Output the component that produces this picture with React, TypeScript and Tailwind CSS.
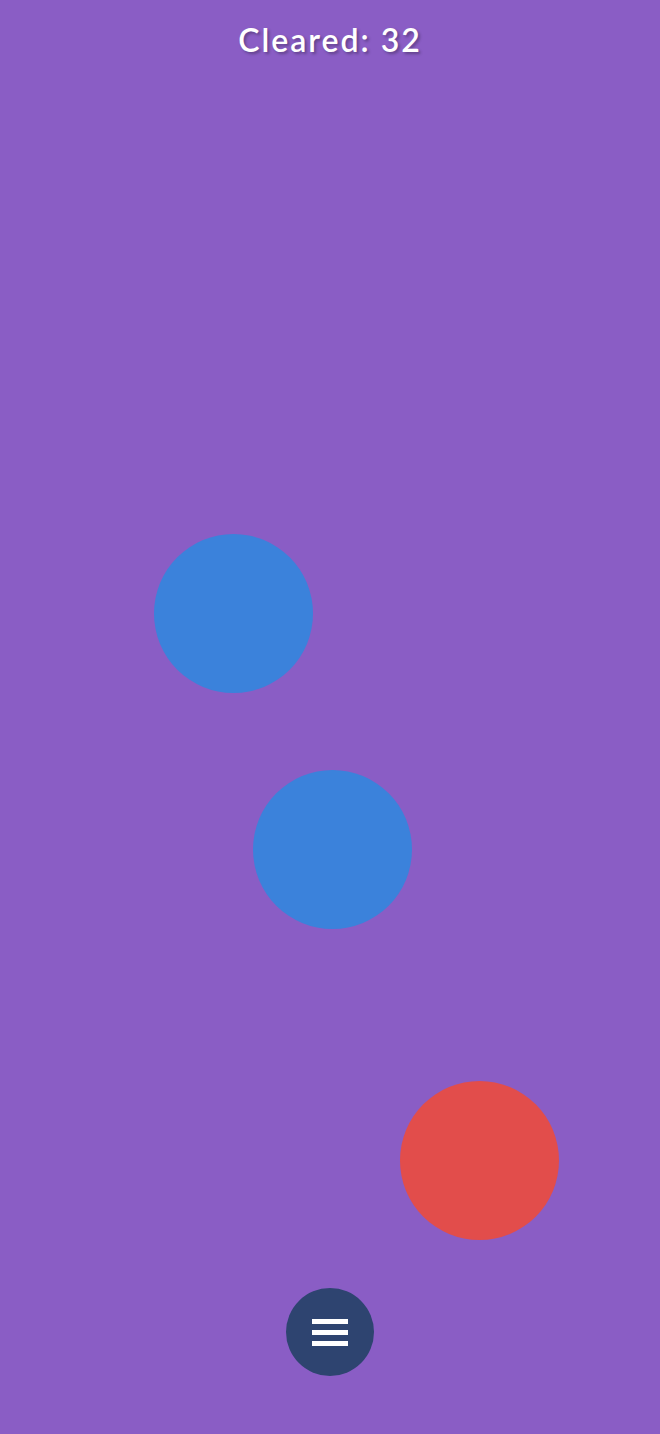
import React from "react";

const balls = [
  { x: 154, y: 534, color: "#3b82db" },
  { x: 253, y: 770, color: "#3b82db" },
  { x: 400, y: 1081, color: "#e24d4b" },
];

export default function App() {
  return (
    <div
      className="relative w-[660px] h-[1434px] overflow-hidden bg-[#8a5dc5] flex flex-col items-center justify-between pt-[20px] pb-[58px]"
      style={{ fontFamily: '"Lato", "Noto Sans", sans-serif' }}
    >
      <h1 className="text-[32px] leading-[40px] font-semibold text-white tracking-[2px] [text-shadow:2px_2px_3px_rgba(0,0,0,0.3)]">
        Cleared: 32
      </h1>
      {balls.map((b, i) => (
        <div
          key={i}
          className="absolute w-[159px] h-[159px] rounded-full"
          style={{ left: b.x, top: b.y, backgroundColor: b.color }}
        />
      ))}
      <button className="w-[88px] h-[88px] rounded-full bg-[#2e4470] flex flex-col items-center justify-center gap-[6px]">
        <span className="block w-[36px] h-[5px] bg-white" />
        <span className="block w-[36px] h-[5px] bg-white" />
        <span className="block w-[36px] h-[5px] bg-white" />
      </button>
    </div>
  );
}
